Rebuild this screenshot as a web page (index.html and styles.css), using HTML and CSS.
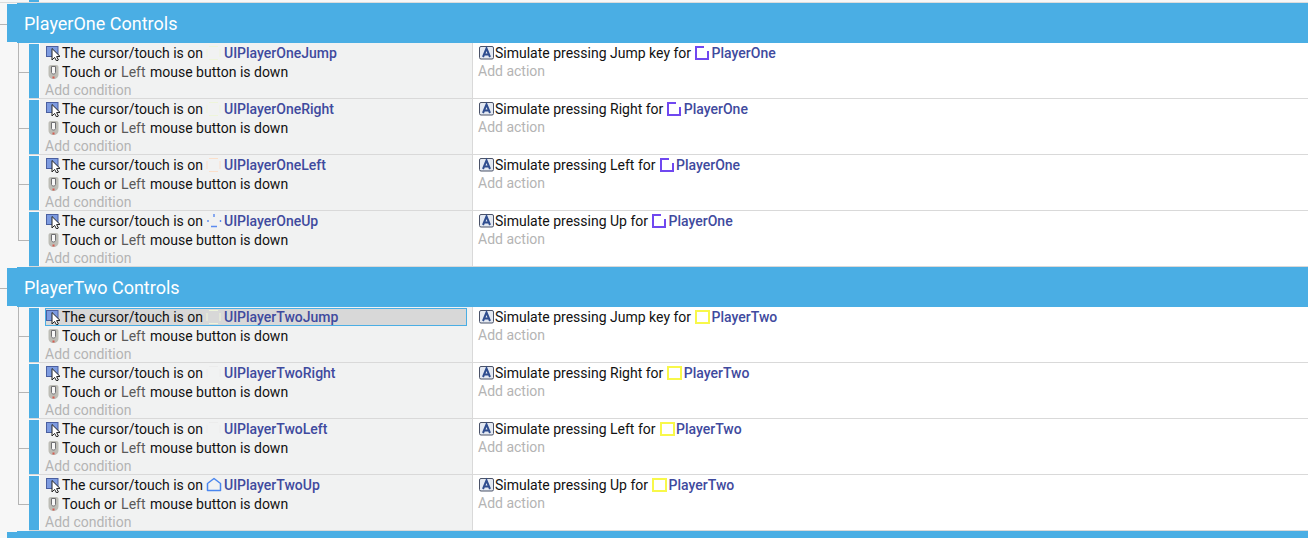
FILE: index.html
```html
<!DOCTYPE html>
<html lang="en">
<head>
<meta charset="utf-8">
<title>Events</title>
<link rel="stylesheet" href="styles.css">
</head>
<body>
<svg class="defs" width="0" height="0" aria-hidden="true">
  <symbol id="i-cursor" viewBox="0 0 16 16">
    <rect x="0.5" y="1.5" width="11.5" height="10" fill="#7d9be0" stroke="#4a5fa0"/>
    <path d="M6 3.5 L6 15 L8.6 12.4 L10.6 16 L12.4 15 L10.6 11.6 L14 11.4 Z" fill="#fff" stroke="#222" stroke-width="1"/>
  </symbol>
  <symbol id="i-mouse" viewBox="0 0 16 16">
    <path d="M2.5 3 C2.5 1.2 4 1 7.5 1 C11 1 12.5 1.2 12.5 3 L12.5 10 C12.5 13.5 10.5 15 7.5 15 C4.5 15 2.5 13.5 2.5 10 Z" fill="#bdbdb6"/>
    <path d="M5.5 2.5 L5.5 8.5 C5.5 10.5 9.5 10.5 9.5 8.5 L9.5 2.5 Z" fill="#f8f8f8" stroke="#6f6f72"/>
    <path d="M6.5 13.5 L8.5 13.5" stroke="#d65a50" stroke-width="2"/>
  </symbol>
  <symbol id="i-action" viewBox="0 0 16 16">
    <rect x="0.5" y="1.5" width="14" height="12.5" rx="1.5" fill="#e4e9f2" stroke="#4a5268"/>
    <path d="M4 12 L7.5 3.4 L11 12 M5.2 9.4 L9.8 9.4" fill="none" stroke="#2f4d8f" stroke-width="2"/>
  </symbol>
  <symbol id="i-purple" viewBox="0 0 16 16">
    <path d="M10 2 L2 2 L2 14 L14 14 L14 6" fill="none" stroke="#7048f0" stroke-width="2"/>
  </symbol>
  <symbol id="i-yellow" viewBox="0 0 16 16">
    <rect x="2" y="2" width="13" height="12" fill="#fff" stroke="#f8f84a" stroke-width="2"/>
  </symbol>
  <symbol id="i-faint-green" viewBox="0 0 16 16">
    <path d="M3 1.5 L12 1.5 M1 4 L1 12 M14 4 L14 12 M3 14.5 L12 14.5" fill="none" stroke="#eef5da" stroke-width="1"/>
  </symbol>
  <symbol id="i-faint-orange" viewBox="0 0 16 16">
    <path d="M3 1.5 L12 1.5 M1 4 L1 12 M14 4 L14 12 M3 14.5 L12 14.5" fill="none" stroke="#fbdfca" stroke-width="1"/>
  </symbol>
  <symbol id="i-faint-grey" viewBox="0 0 16 16">
    <path d="M3 1.5 L12 1.5 M1 4 L1 12 M14 4 L14 12" fill="none" stroke="#ececec" stroke-width="1"/>
  </symbol>
  <symbol id="i-dash" viewBox="0 0 16 16">
    <path d="M8 1 L8 4 M2 7 L2 9 M14.5 7 L14.5 9 M5 13.5 L11 13.5" fill="none" stroke="#5b8bf0" stroke-width="1.4"/>
  </symbol>
  <symbol id="i-house" viewBox="0 0 16 16">
    <path d="M8 1.5 L14.5 6.5 L14.5 13.5 L1.5 13.5 L1.5 6.5 Z" fill="none" stroke="#4a86ee" stroke-width="1.5" stroke-linejoin="round"/>
  </symbol>
</svg>

<main class="sheet">
  <div class="prev"><span class="prev-bar"></span></div>

  <section class="group">
    <header class="group-head"><span class="group-tab"></span><h2 class="group-band">PlayerOne Controls</h2></header>
    <div class="events">
      <article class="event">
        <div class="bar"></div>
        <div class="conds">
          <div class="line"><svg class="ico"><use href="#i-cursor"/></svg><span>The cursor/touch is on</span><svg class="ico obj"><use href="#i-faint-green"/></svg><b class="name">UIPlayerOneJump</b></div>
          <div class="line"><svg class="ico"><use href="#i-mouse"/></svg><span>Touch or <em>Left</em> mouse button is down</span></div>
          <div class="add">Add condition</div>
        </div>
        <div class="acts">
          <div class="line"><svg class="ico"><use href="#i-action"/></svg><span>Simulate pressing Jump key for</span><svg class="ico obj"><use href="#i-purple"/></svg><b class="name">PlayerOne</b></div>
          <div class="add">Add action</div>
        </div>
      </article>
      <article class="event">
        <div class="bar"></div>
        <div class="conds">
          <div class="line"><svg class="ico"><use href="#i-cursor"/></svg><span>The cursor/touch is on</span><svg class="ico obj"><use href="#i-faint-green"/></svg><b class="name">UIPlayerOneRight</b></div>
          <div class="line"><svg class="ico"><use href="#i-mouse"/></svg><span>Touch or <em>Left</em> mouse button is down</span></div>
          <div class="add">Add condition</div>
        </div>
        <div class="acts">
          <div class="line"><svg class="ico"><use href="#i-action"/></svg><span>Simulate pressing Right for</span><svg class="ico obj"><use href="#i-purple"/></svg><b class="name">PlayerOne</b></div>
          <div class="add">Add action</div>
        </div>
      </article>
      <article class="event">
        <div class="bar"></div>
        <div class="conds">
          <div class="line"><svg class="ico"><use href="#i-cursor"/></svg><span>The cursor/touch is on</span><svg class="ico obj"><use href="#i-faint-orange"/></svg><b class="name">UIPlayerOneLeft</b></div>
          <div class="line"><svg class="ico"><use href="#i-mouse"/></svg><span>Touch or <em>Left</em> mouse button is down</span></div>
          <div class="add">Add condition</div>
        </div>
        <div class="acts">
          <div class="line"><svg class="ico"><use href="#i-action"/></svg><span>Simulate pressing Left for</span><svg class="ico obj"><use href="#i-purple"/></svg><b class="name">PlayerOne</b></div>
          <div class="add">Add action</div>
        </div>
      </article>
      <article class="event">
        <div class="bar"></div>
        <div class="conds">
          <div class="line"><svg class="ico"><use href="#i-cursor"/></svg><span>The cursor/touch is on</span><svg class="ico obj"><use href="#i-dash"/></svg><b class="name">UIPlayerOneUp</b></div>
          <div class="line"><svg class="ico"><use href="#i-mouse"/></svg><span>Touch or <em>Left</em> mouse button is down</span></div>
          <div class="add">Add condition</div>
        </div>
        <div class="acts">
          <div class="line"><svg class="ico"><use href="#i-action"/></svg><span>Simulate pressing Up for</span><svg class="ico obj"><use href="#i-purple"/></svg><b class="name">PlayerOne</b></div>
          <div class="add">Add action</div>
        </div>
      </article>
    </div>
  </section>

  <section class="group">
    <header class="group-head"><span class="group-tab"></span><h2 class="group-band">PlayerTwo Controls</h2></header>
    <div class="events">
      <article class="event">
        <div class="bar"></div>
        <div class="conds">
          <div class="line selected"><svg class="ico"><use href="#i-cursor"/></svg><span>The cursor/touch is on</span><svg class="ico obj"><use href="#i-faint-green"/></svg><b class="name">UIPlayerTwoJump</b></div>
          <div class="line"><svg class="ico"><use href="#i-mouse"/></svg><span>Touch or <em>Left</em> mouse button is down</span></div>
          <div class="add">Add condition</div>
        </div>
        <div class="acts">
          <div class="line"><svg class="ico"><use href="#i-action"/></svg><span>Simulate pressing Jump key for</span><svg class="ico obj"><use href="#i-yellow"/></svg><b class="name">PlayerTwo</b></div>
          <div class="add">Add action</div>
        </div>
      </article>
      <article class="event">
        <div class="bar"></div>
        <div class="conds">
          <div class="line"><svg class="ico"><use href="#i-cursor"/></svg><span>The cursor/touch is on</span><svg class="ico obj"><use href="#i-faint-grey"/></svg><b class="name">UIPlayerTwoRight</b></div>
          <div class="line"><svg class="ico"><use href="#i-mouse"/></svg><span>Touch or <em>Left</em> mouse button is down</span></div>
          <div class="add">Add condition</div>
        </div>
        <div class="acts">
          <div class="line"><svg class="ico"><use href="#i-action"/></svg><span>Simulate pressing Right for</span><svg class="ico obj"><use href="#i-yellow"/></svg><b class="name">PlayerTwo</b></div>
          <div class="add">Add action</div>
        </div>
      </article>
      <article class="event">
        <div class="bar"></div>
        <div class="conds">
          <div class="line"><svg class="ico"><use href="#i-cursor"/></svg><span>The cursor/touch is on</span><svg class="ico obj"><use href="#i-faint-grey"/></svg><b class="name">UIPlayerTwoLeft</b></div>
          <div class="line"><svg class="ico"><use href="#i-mouse"/></svg><span>Touch or <em>Left</em> mouse button is down</span></div>
          <div class="add">Add condition</div>
        </div>
        <div class="acts">
          <div class="line"><svg class="ico"><use href="#i-action"/></svg><span>Simulate pressing Left for</span><svg class="ico obj"><use href="#i-yellow"/></svg><b class="name">PlayerTwo</b></div>
          <div class="add">Add action</div>
        </div>
      </article>
      <article class="event">
        <div class="bar"></div>
        <div class="conds">
          <div class="line"><svg class="ico"><use href="#i-cursor"/></svg><span>The cursor/touch is on</span><svg class="ico obj"><use href="#i-house"/></svg><b class="name">UIPlayerTwoUp</b></div>
          <div class="line"><svg class="ico"><use href="#i-mouse"/></svg><span>Touch or <em>Left</em> mouse button is down</span></div>
          <div class="add">Add condition</div>
        </div>
        <div class="acts">
          <div class="line"><svg class="ico"><use href="#i-action"/></svg><span>Simulate pressing Up for</span><svg class="ico obj"><use href="#i-yellow"/></svg><b class="name">PlayerTwo</b></div>
          <div class="add">Add action</div>
        </div>
      </article>
    </div>
  </section>

  <section class="group">
    <header class="group-head"><span class="group-tab"></span><h2 class="group-band"></h2></header>
  </section>
</main>
</body>
</html>
```
FILE: styles.css
```css
* { box-sizing: border-box; }
html, body { margin: 0; height: 100%; overflow: hidden; }
body {
  background: #f7f7f7;
  font-family: Roboto, "Liberation Sans", sans-serif;
  font-size: 14px;
  color: #111;
}
.defs { display: block; height: 0; }
.sheet { display: block; height: 538px; overflow: hidden; }

.prev { height: 3px; padding-left: 29px; border-bottom: 1px solid #dcdcdc; }
.prev-bar { display: block; width: 10px; height: 2px; background: #4aaee4; }

.group { position: relative; }
.group::before {
  content: "";
  position: absolute;
  left: 0;
  top: 21px;
  width: 7px;
  height: 1px;
  background: #b5b5b5;
}
.group-head { display: flex; align-items: center; height: 40px; padding-left: 7px; }
.group-tab { width: 10px; height: 38px; background: #4aaee4; }
.group-band {
  flex: 1;
  height: 40px;
  margin: 0;
  padding-left: 7px;
  background: #4aaee4;
  color: #fff;
  font-size: 18px;
  font-weight: 400;
  line-height: 42px;
}

.events { position: relative; padding-left: 29px; }
.events::before {
  content: "";
  position: absolute;
  left: 18px;
  top: 0;
  width: 1px;
  height: 197px;
  background: #b5b5b5;
}

.event { position: relative; display: flex; height: 56px; border-bottom: 1px solid #d9d9d9; }
.event::before {
  content: "";
  position: absolute;
  left: -11px;
  top: 29px;
  width: 11px;
  height: 1px;
  background: #b5b5b5;
}
.bar { width: 10px; margin-top: 1px; background: #4aaee4; }
.conds {
  width: 434px;
  padding: 1px 5px 0 5px;
  background: #f1f2f2;
  border-left: 1px solid #fff;
  border-right: 1px solid #d9d9d9;
}
.conds .line + .line { margin-top: 1px; }
.acts { flex: 1; padding: 1px 5px 0 5px; background: #fff; }
.acts .obj { margin-right: 1.5px; }

.line { display: flex; align-items: center; height: 18px; white-space: nowrap; }
.line.selected {
  background: #d8d8d8;
  outline: 1px solid #4aaee4;
  outline-offset: -1px;
}
.ico { flex: none; width: 16px; height: 16px; margin-left: 1px; }
.obj { margin-left: 3px; margin-right: 2px; }
.name { font-weight: 500; color: #3f4a9e; }
em { font-style: normal; color: #5a5a5a; margin: 0 1px; }
.add { height: 18px; line-height: 18px; color: #b4b4b4; }
```
